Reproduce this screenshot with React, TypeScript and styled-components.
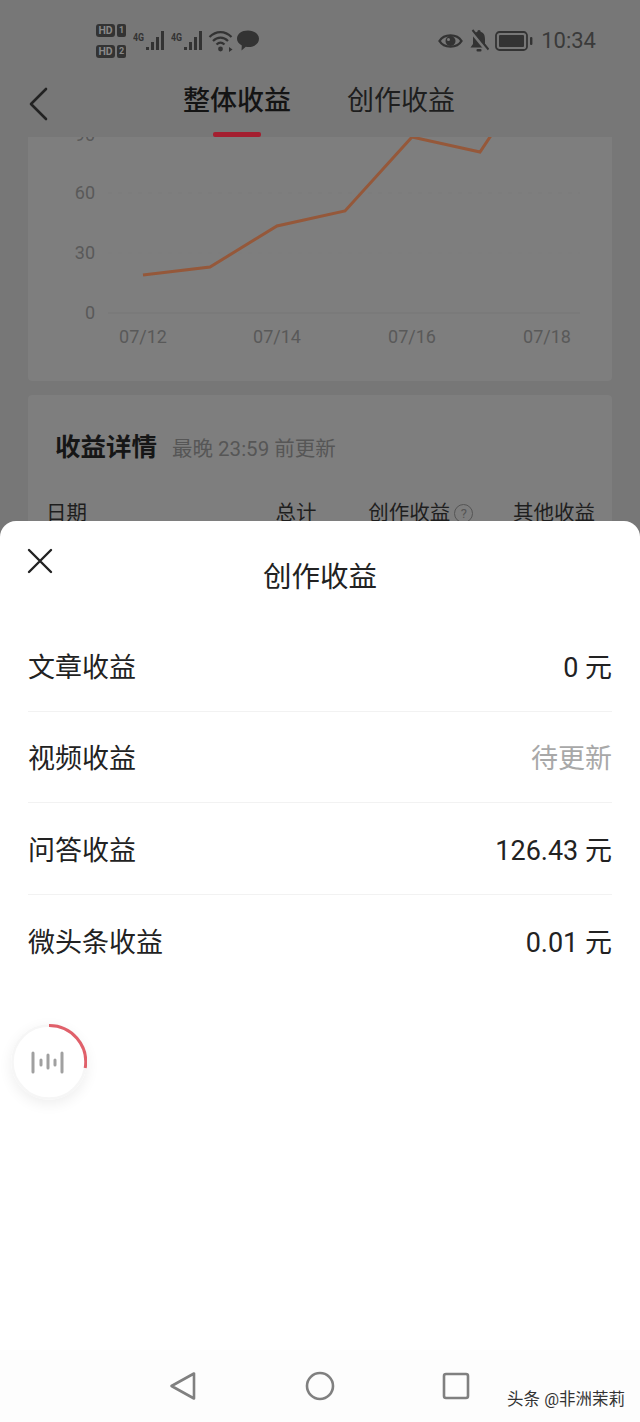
import React from 'react';
import styled, { createGlobalStyle } from 'styled-components';

const FONT = `"Roboto", "Noto Sans CJK SC", sans-serif`;

const rows = [
  { label: '文章收益', value: '0 元' },
  { label: '视频收益', value: '待更新', pending: true },
  { label: '问答收益', value: '126.43 元' },
  { label: '微头条收益', value: '0.01 元' },
];

const App: React.FC = () => {
  return (
    <Screen>
      <GlobalStyle />
      <StatusBar>
        <SimGroup>
          <SimRow>
            <HdBadge>HD</HdBadge>
            <SimBadge>1</SimBadge>
          </SimRow>
          <SimRow>
            <HdBadge>HD</HdBadge>
            <SimBadge>2</SimBadge>
          </SimRow>
        </SimGroup>
        <SignalGroup>
          <NetLabel>4G</NetLabel>
          <SignalBars />
        </SignalGroup>
        <SignalGroup>
          <NetLabel>4G</NetLabel>
          <SignalBars />
        </SignalGroup>
        <WifiIcon />
        <BubbleIcon />
        <StatusRight>
          <EyeIcon />
          <BellOffIcon />
          <BatteryIcon />
          <Clock>10:34</Clock>
        </StatusRight>
      </StatusBar>

      <Header>
        <BackButton>
          <svg width="20" height="34" viewBox="0 0 20 34" fill="none">
            <path d="M18 2 L3 17 L18 32" stroke="#222" strokeWidth="2.6" strokeLinecap="round" strokeLinejoin="round" />
          </svg>
        </BackButton>
        <Tabs>
          <Tab $active>
            整体收益
            <TabLine />
          </Tab>
          <Tab>创作收益</Tab>
        </Tabs>
      </Header>

      <ChartCard>
        <IncomeChart />
      </ChartCard>

      <DetailCard>
        <DetailTitleRow>
          <DetailTitle>收益详情</DetailTitle>
          <DetailNote>最晚 23:59 前更新</DetailNote>
        </DetailTitleRow>
        <TableHead>
          <DateCol>日期</DateCol>
          <TotalCol>总计</TotalCol>
          <CreateCol>
            创作收益
            <HelpMark>?</HelpMark>
          </CreateCol>
          <OtherCol>其他收益</OtherCol>
        </TableHead>
      </DetailCard>

      <Sheet>
        <SheetHeader>
          <CloseButton>
            <svg width="26" height="26" viewBox="0 0 26 26" fill="none">
              <path d="M2 2 L24 24 M24 2 L2 24" stroke="#222" strokeWidth="2.4" strokeLinecap="round" />
            </svg>
          </CloseButton>
          <SheetTitle>创作收益</SheetTitle>
        </SheetHeader>
        <RowList>
          {rows.map((row) => (
            <IncomeRow key={row.label}>
              <span>{row.label}</span>
              <IncomeValue $pending={row.pending}>{row.value}</IncomeValue>
            </IncomeRow>
          ))}
        </RowList>
        <NavBar>
          <svg width="28" height="30" viewBox="0 0 28 30" fill="none">
            <path d="M25 2.5 V27.5 L2.5 15 Z" stroke="#808080" strokeWidth="2.6" strokeLinejoin="round" />
          </svg>
          <svg width="30" height="30" viewBox="0 0 30 30" fill="none">
            <circle cx="15" cy="15" r="13" stroke="#808080" strokeWidth="2.6" />
          </svg>
          <svg width="28" height="28" viewBox="0 0 28 28" fill="none">
            <rect x="2" y="2" width="24" height="24" rx="2" stroke="#808080" strokeWidth="2.6" />
          </svg>
        </NavBar>
        <Watermark>头条 @非洲茉莉</Watermark>
      </Sheet>

      <AudioBall>
        <svg width="76" height="76" viewBox="0 0 76 76" fill="none">
          <circle cx="38" cy="38" r="36.5" stroke="#f6f6f6" strokeWidth="2.5" />
          <path d="M38 1.5 A36.5 36.5 0 0 1 74.2 44" stroke="#e0606a" strokeWidth="3" />
          <path d="M22 29 V48 M30 36 V41 M37 31 V44 M44 36 V41 M51 29 V48" stroke="#a0a0a0" strokeWidth="3" strokeLinecap="round" />
        </svg>
      </AudioBall>
    </Screen>
  );
};

const SignalBars = () => (
  <svg width="20" height="22" viewBox="0 0 20 22" fill="#333">
    <rect x="0" y="17" width="3" height="3" />
    <rect x="5" y="12" width="3" height="8" />
    <rect x="10" y="7" width="3" height="13" />
    <rect x="15" y="1" width="3" height="19" />
  </svg>
);

const WifiIcon = () => (
  <WifiSvg width="26" height="24" viewBox="0 0 26 24" fill="none">
    <path d="M1.5 8 C8 1.5 17 1.5 23.5 8 M5 12 C9.5 7.5 15.5 7.5 20 12 M8.5 15.5 C11 13.2 14 13.2 16.5 15.5" stroke="#333" strokeWidth="2.2" />
    <circle cx="12.5" cy="20" r="2.4" fill="#333" />
    <path d="M21 18 L24.5 20.5 L21 23 Z" fill="#333" />
  </WifiSvg>
);

const BubbleIcon = () => (
  <BubbleSvg width="24" height="22" viewBox="0 0 24 22" fill="#333">
    <path d="M12 0.5 C18.5 0.5 23 4 23 8.8 C23 13.6 18.5 17 12.5 17 C11.5 17 10.6 16.9 9.8 16.8 L5.5 20.5 L5.8 15.4 C2.8 13.9 1 11.6 1 8.8 C1 4 5.5 0.5 12 0.5 Z" />
  </BubbleSvg>
);

const EyeIcon = () => (
  <svg width="25" height="18" viewBox="0 0 25 18" fill="none">
    <path d="M1.5 9 C6 1.5 19 1.5 23.5 9 C19 16.5 6 16.5 1.5 9 Z" stroke="#333" strokeWidth="2.4" />
    <circle cx="12.5" cy="9" r="5" fill="#333" />
    <circle cx="10.5" cy="7.5" r="1.5" fill="#7a7a7a" />
  </svg>
);

const BellOffIcon = () => (
  <svg width="20" height="24" viewBox="0 0 20 24" fill="#333">
    <path d="M10 1 C11 1 11.6 1.8 11.6 2.8 C14.8 3.6 16 6.4 16 10 L16 15 L18.5 18.5 L1.5 18.5 L4 15 L4 10 C4 6.4 5.2 3.6 8.4 2.8 C8.4 1.8 9 1 10 1 Z" />
    <rect x="7.5" y="20" width="5" height="2.4" rx="1" />
    <path d="M2 2.5 L18 22" stroke="#777" strokeWidth="3" />
    <path d="M3.5 1 L19.5 20.5" stroke="#333" strokeWidth="2" />
  </svg>
);

const BatteryIcon = () => (
  <svg width="38" height="20" viewBox="0 0 38 20" fill="none">
    <rect x="1" y="1" width="31" height="18" rx="3.5" stroke="#333" strokeWidth="1.8" />
    <rect x="4" y="4" width="25" height="12" rx="1" fill="#333" />
    <rect x="35" y="6" width="2.4" height="8" rx="1" fill="#333" />
  </svg>
);

const IncomeChart = () => (
  <ChartSvg width="584" height="244" viewBox="28 137 584 244">
    <line x1="108" y1="193" x2="580" y2="193" stroke="#7a7a7a" strokeDasharray="4 6" />
    <line x1="108" y1="253" x2="580" y2="253" stroke="#7d7d7d" strokeDasharray="4 6" />
    <line x1="108" y1="313" x2="580" y2="313" stroke="#777" />
    <polyline
      points="143,275 210,267 277,226 345,211 412,137 480,152 492,134"
      fill="none"
      stroke="#95583a"
      strokeWidth="3"
    />
    <AxisLabel x="95" y="141" textAnchor="end">90</AxisLabel>
    <AxisLabel x="95" y="199" textAnchor="end">60</AxisLabel>
    <AxisLabel x="95" y="259" textAnchor="end">30</AxisLabel>
    <AxisLabel x="95" y="319" textAnchor="end">0</AxisLabel>
    <AxisLabel x="143" y="343" textAnchor="middle">07/12</AxisLabel>
    <AxisLabel x="277" y="343" textAnchor="middle">07/14</AxisLabel>
    <AxisLabel x="412" y="343" textAnchor="middle">07/16</AxisLabel>
    <AxisLabel x="547" y="343" textAnchor="middle">07/18</AxisLabel>
  </ChartSvg>
);

export default App;

const GlobalStyle = createGlobalStyle`
  html, body {
    margin: 0;
    padding: 0;
    background: #777;
  }
`;

const Screen = styled.div`
  position: relative;
  width: 640px;
  height: 1422px;
  overflow: hidden;
  background: #777777;
  font-family: ${FONT};
  color: #1e1e1e;
`;

const StatusBar = styled.div`
  display: flex;
  align-items: center;
  height: 80px;
  padding: 2px 44px 0 96px;
  box-sizing: border-box;
`;

const SimGroup = styled.div`
  display: flex;
  flex-direction: column;
  gap: 8px;
  width: 37px;
`;

const SimRow = styled.div`
  display: flex;
  gap: 2px;
`;

const HdBadge = styled.span`
  width: 19px;
  height: 13px;
  border-radius: 3px;
  background: #333;
  color: #888;
  font: 700 10.5px/13px ${FONT};
  text-align: center;
`;

const SimBadge = styled(HdBadge)`
  width: 9px;
  border-radius: 2px;
  font-size: 9px;
`;

const SignalGroup = styled.div`
  display: flex;
  align-items: flex-start;
  width: 38px;
`;

const NetLabel = styled.span`
  width: 13px;
  font: 700 11px/16px ${FONT};
  color: #333;
  transform: scaleX(0.8);
  transform-origin: left center;
`;

const WifiSvg = styled.svg`
  margin-left: -1px;
`;

const BubbleSvg = styled.svg`
  margin-left: 2px;
`;

const StatusRight = styled.div`
  display: flex;
  align-items: center;
  gap: 6px;
  margin-left: auto;
`;

const Clock = styled.span`
  margin-left: 2px;
  font: 400 22px/24px ${FONT};
  color: #3a3a3a;
`;

const Header = styled.div`
  display: flex;
  height: 57px;
`;

const BackButton = styled.div`
  display: flex;
  align-items: center;
  padding: 0 0 10px 28px;
  width: 183px;
  box-sizing: border-box;
`;

const Tabs = styled.div`
  display: flex;
  gap: 56px;
`;

const Tab = styled.div<{ $active?: boolean }>`
  position: relative;
  font-size: 27px;
  line-height: 43px;
  font-weight: ${({ $active }) => ($active ? 500 : 400)};
  color: ${({ $active }) => ($active ? '#141414' : '#1e1e1e')};
`;

const TabLine = styled.div`
  position: absolute;
  left: 30px;
  bottom: 0;
  width: 48px;
  height: 5px;
  border-radius: 2px;
  background: #a41f30;
`;

const ChartCard = styled.div`
  width: 584px;
  height: 244px;
  margin: 0 28px;
  background: #7e7e7e;
  border-radius: 0 0 4px 4px;
  overflow: hidden;
`;

const ChartSvg = styled.svg`
  display: block;
`;

const AxisLabel = styled.text`
  font: 400 18px ${FONT};
  fill: #595959;
`;

const DetailCard = styled.div`
  width: 584px;
  height: 130px;
  margin: 14px 28px 0;
  background: #7e7e7e;
  border-radius: 4px;
  box-sizing: border-box;
  padding: 30px 17px 0 18px;
`;

const DetailTitleRow = styled.div`
  display: flex;
  align-items: center;
  gap: 15px;
  padding-left: 9px;
`;

const DetailTitle = styled.div`
  font-size: 25.5px;
  line-height: 44px;
  font-weight: 700;
  color: #161616;
`;

const DetailNote = styled.div`
  font-size: 20.5px;
  color: #565656;
`;

const TableHead = styled.div`
  display: flex;
  align-items: center;
  margin-top: 29px;
  font-size: 20.5px;
  line-height: 30px;
  color: #1e1e1e;
`;

const DateCol = styled.div`
  width: 230px;
`;

const TotalCol = styled.div`
  width: 93px;
`;

const CreateCol = styled.div`
  display: flex;
  align-items: center;
  gap: 4px;
  width: 145px;
`;

const OtherCol = styled.div`
  white-space: nowrap;
`;

const HelpMark = styled.span`
  width: 17px;
  height: 17px;
  border: 1px solid #555;
  border-radius: 50%;
  font-size: 13px;
  line-height: 17px;
  text-align: center;
  color: #555;
`;

const Sheet = styled.div`
  position: absolute;
  left: 0;
  right: 0;
  top: 521px;
  bottom: 0;
  display: flex;
  flex-direction: column;
  background: #ffffff;
  border-radius: 16px 16px 0 0;
`;

const SheetHeader = styled.div`
  position: relative;
  height: 99px;
  flex: none;
`;

const CloseButton = styled.div`
  position: absolute;
  left: 27px;
  top: 27px;
  line-height: 0;
`;

const SheetTitle = styled.div`
  padding-top: 36px;
  text-align: center;
  font-size: 28.5px;
  line-height: 42px;
  color: #222;
`;

const RowList = styled.div`
  padding: 0 28px;
`;

const IncomeRow = styled.div`
  display: flex;
  justify-content: space-between;
  align-items: center;
  height: 91.6px;
  box-sizing: border-box;
  font-size: 27px;
  color: #222;
  border-bottom: 1px solid #f2f2f2;

  &:last-child {
    border-bottom: none;
  }
`;

const IncomeValue = styled.span<{ $pending?: boolean }>`
  color: ${({ $pending }) => ($pending ? '#a8a8a8' : '#222')};
`;

const NavBar = styled.div`
  display: flex;
  align-items: center;
  gap: 107.5px;
  height: 72px;
  margin-top: auto;
  padding-left: 169px;
  box-sizing: border-box;
  background: #fdfdfd;
`;

const Watermark = styled.div`
  position: absolute;
  right: 15px;
  bottom: 11px;
  font-size: 16.5px;
  line-height: 22px;
  color: #333;
  text-shadow: 0 0 1px #fff;
`;

const AudioBall = styled.div`
  position: absolute;
  left: 11px;
  top: 1024px;
  width: 76px;
  height: 76px;
  border-radius: 50%;
  background: #fff;
  box-shadow: 0 4px 14px rgba(0, 0, 0, 0.07);
  line-height: 0;
`;
